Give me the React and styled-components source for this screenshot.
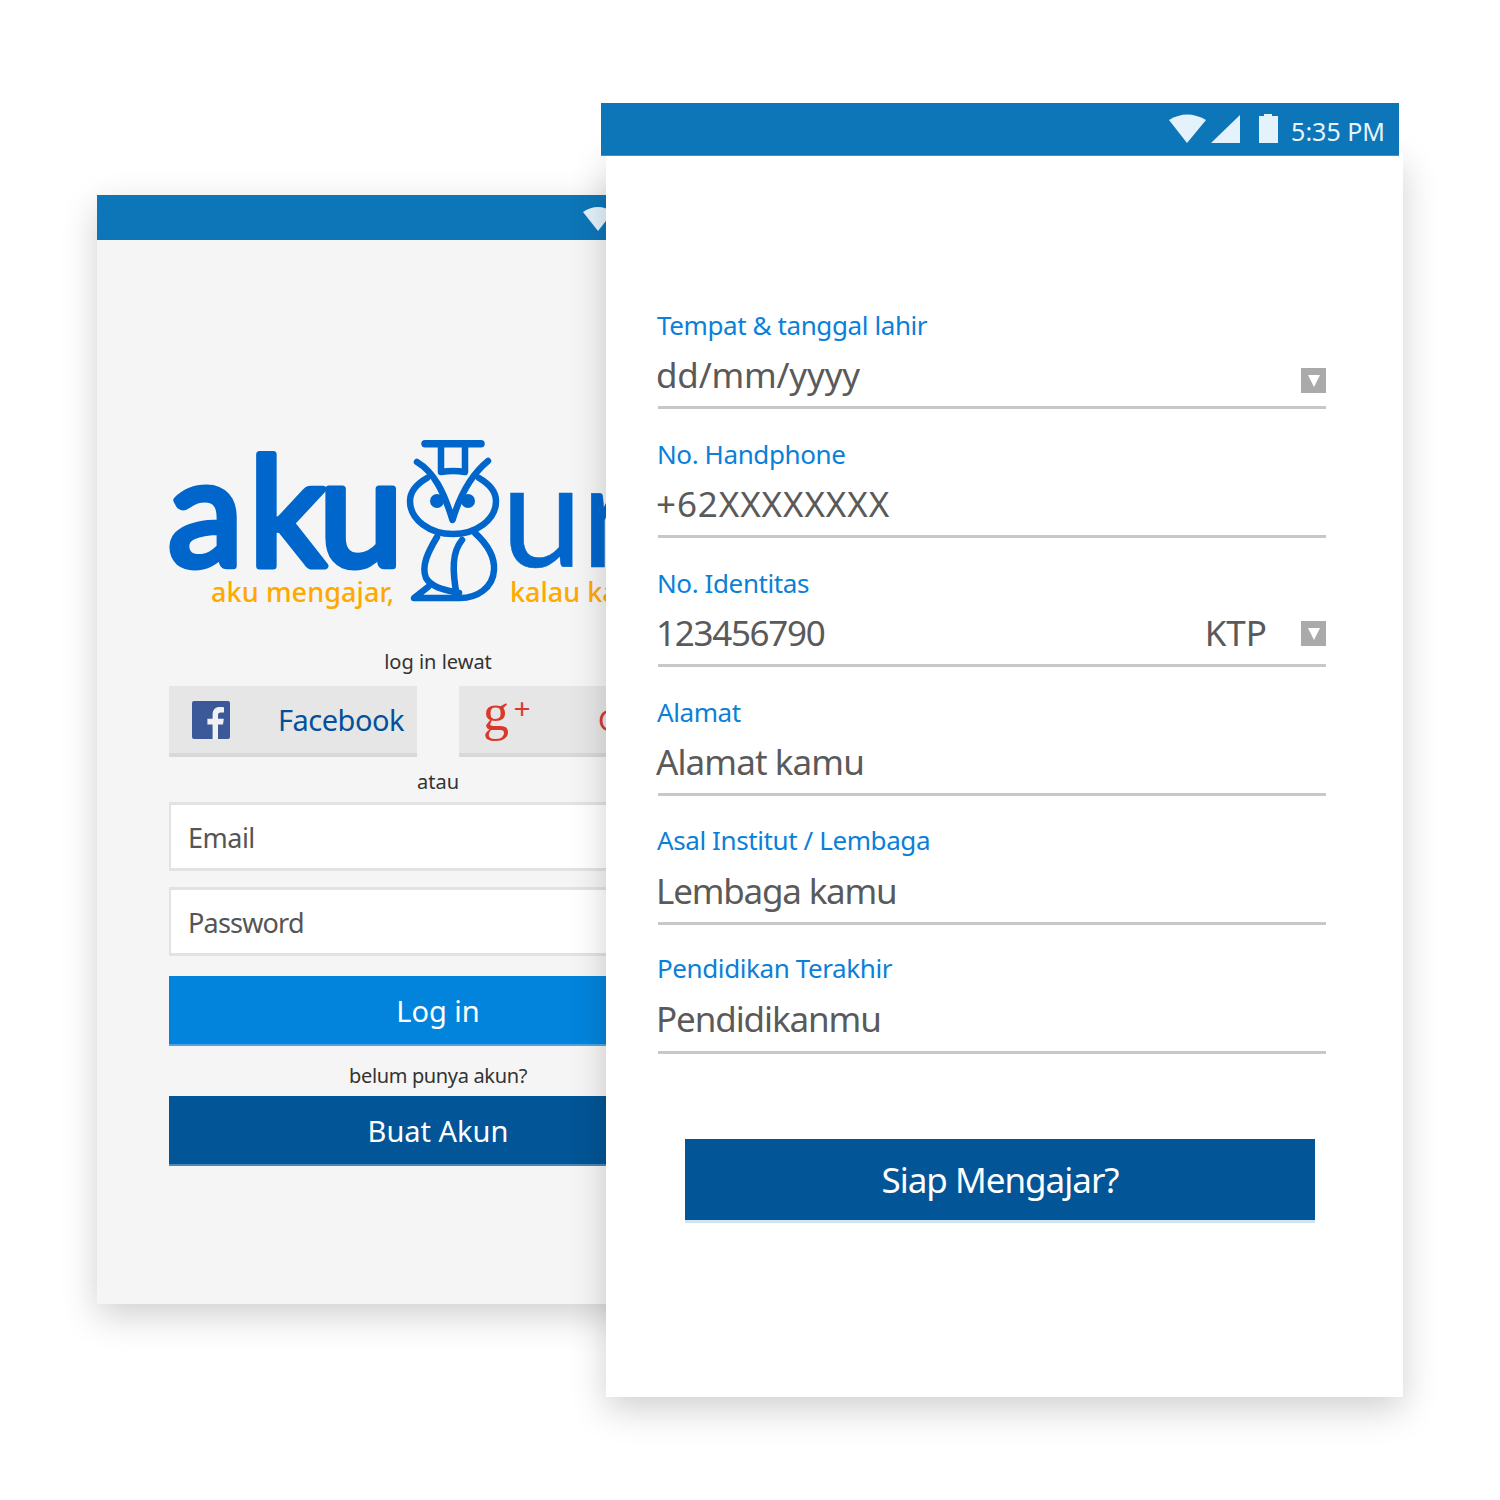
import React from "react";
import styled, { createGlobalStyle } from "styled-components";

const Global = createGlobalStyle`
  html, body { margin: 0; padding: 0; background: #fff; }
  * { box-sizing: border-box; }
  body { font-family: "Noto Sans", "Open Sans", sans-serif; }
`;

const Stage = styled.div`
  position: relative;
  width: 1500px;
  height: 1500px;
  background: #fff;
  overflow: hidden;
`;

const BackPhone = styled.section`
  position: absolute;
  left: 97px;
  top: 195px;
  width: 682px;
  height: 1109px;
  background: #f5f5f5;
  box-shadow: 0 12px 34px rgba(0, 0, 0, 0.19);
  display: flex;
  flex-direction: column;
`;

const BackBar = styled.div`
  height: 45px;
  background: #0d76b8;
  display: flex;
  justify-content: flex-end;
  align-items: center;
  padding-right: 166px;
`;

const BackBody = styled.div`
  padding: 0 72px;
  display: flex;
  flex-direction: column;
`;

const LogoBox = styled.div`
  height: 380px;
  margin: 0 -72px;
`;

const Hint = styled.div`
  font-size: 20px;
  line-height: 28px;
  color: #333;
  text-align: center;
  white-space: nowrap;
  letter-spacing: ${(p) => p.$track || 0}px;
  margin: ${(p) => p.$margin || 0};
`;

const SocialRow = styled.div`
  display: grid;
  grid-template-columns: 248px 248px;
  justify-content: space-between;
  margin: 10px 0 11px;
`;

const Social = styled.div`
  height: 71px;
  background: #e6e6e6;
  border-bottom: 4px solid #d8d8d8;
  display: flex;
  align-items: center;
  padding-left: ${(p) => p.$pad}px;
  color: ${(p) => p.$color};
  font-size: 29px;
  letter-spacing: -0.5px;
  white-space: nowrap;
`;

const SocialIcon = styled.span`
  width: ${(p) => p.$w}px;
  flex: none;
  display: flex;
  align-items: center;
`;

const GPlus = styled.span`
  font-family: "Liberation Serif", serif;
  color: #d8392b;
  font-size: 52px;
  line-height: 52px;
  display: flex;
  align-items: flex-start;
  margin-top: -14px;
`;

const Plus = styled.span`
  font-size: 30px;
  line-height: 44px;
  font-weight: 700;
  margin-left: 5px;
`;

const Input = styled.div`
  height: 69px;
  background: #fff;
  border: 2px solid #e2e2e2;
  border-top-width: 3px;
  border-bottom-width: 3px;
  border-right: 0;
  display: flex;
  align-items: center;
  padding: 2px 0 0 17px;
  font-size: 27px;
  letter-spacing: ${(p) => p.$track}px;
  color: #555;
  margin: ${(p) => p.$margin};
`;

const Action = styled.div`
  height: ${(p) => p.$h}px;
  background: ${(p) => p.$bg};
  border-bottom: 2px solid ${(p) => p.$edge};
  color: #fff;
  font-size: ${(p) => p.$size}px;
  display: flex;
  align-items: center;
  justify-content: center;
`;

const FrontPhone = styled.section`
  position: absolute;
  left: 606px;
  top: 153px;
  width: 797px;
  height: 1244px;
  background: #fff;
  box-shadow: 0 12px 34px rgba(0, 0, 0, 0.19);
`;

const FrontBar = styled.div`
  height: 53px;
  width: 798px;
  margin: -50px 0 0 -5px;
  background: #0d76b8;
  border-bottom: 1px solid #3a93cc;
  display: flex;
  justify-content: flex-end;
  align-items: center;
  padding: 3px 14px 0 0;
  color: #e8f4fb;
  font-size: 25px;
`;

const BarIcons = styled.svg`
  margin: -3px 12px 0 0;
`;

const Form = styled.div`
  padding: 123.5px 77px 0 52px;
  display: flex;
  flex-direction: column;
`;

const Field = styled.div`
  height: 129px;
  padding-top: 27px;
  display: flex;
  flex-direction: column;
`;

const Label = styled.div`
  font-size: 26px;
  line-height: 36px;
  color: #0a80d8;
  letter-spacing: -0.4px;
  margin: ${(p) => p.$rise || 0}px 0 0 -1px;
`;

const ValueRow = styled.div`
  flex: 1;
  border-bottom: 3px solid #c8c8c8;
  display: flex;
  align-items: center;
  color: #5a5a5a;
  font-size: 35px;
  margin-top: 1px;
`;

const Value = styled.span`
  flex: 1;
  margin-left: -2px;
  letter-spacing: ${(p) => p.$track}px;
`;

const Unit = styled.span`
  margin-right: 34px;
`;

const Caret = styled.span`
  width: 25px;
  height: 25px;
  background: #aaa;
  margin-top: ${(p) => p.$drop}px;
  display: flex;
  align-items: center;
  justify-content: center;
`;

const Tri = styled.span`
  width: 0;
  height: 0;
  border-left: 6px solid transparent;
  border-right: 6px solid transparent;
  border-top: 12px solid #fff;
`;

const Submit = styled.div`
  margin: 85.5px 0 0 27px;
  width: 630px;
  height: 84px;
  background: #025596;
  border-bottom: 3px solid #cfe3f1;
  color: #fff;
  font-size: 35px;
  letter-spacing: -1px;
  display: flex;
  align-items: center;
  justify-content: center;
`;

const Owl = () => (
  <g fill="none" stroke="#0066cc" strokeLinecap="round" strokeLinejoin="round" strokeWidth="6.500">
    <path d="M425 443.700H481" strokeWidth="7.500" />
    <path d="M441 446V472Q453 470 465 472V446" />
    <path d="M417 462C434 472 444 492 452.500 520C461 492 472 474 488 461" />
    <path d="M427 478C415 485 410 493 410 501C410 520 430 534 453 534C476 534 496 520 496 501C496 493 491 485 479 478" />
    <circle cx="437" cy="501" r="7" fill="#0066cc" stroke="none" />
    <circle cx="468" cy="501" r="7" fill="#0066cc" stroke="none" />
    <path d="M475 533C487 544 495 556 494 570C493 588 477 598 460 598H414L428 587" />
    <path d="M437 537C428 552 421 566 426 578C432 588 446 590 459 593" />
    <path d="M462 540C452 552 452 570 457 597" />
  </g>
);

const Logo = () => (
  <svg width="682" height="380" viewBox="97 240 682 380">
    <g fontFamily="Lato, sans-serif" fill="#0066cc" stroke="#0066cc" strokeLinejoin="round">
      <text x="168 249 319" y="566" fontSize="151" fontWeight="400" strokeWidth="7">aku</text>
      <text x="501 581 640" y="567" fontSize="146" fontWeight="400" strokeWidth="0.500">uru</text>
    </g>
    <Owl />
    <g fontFamily="Noto Sans, sans-serif" fill="#ffa800" fontSize="27" fontWeight="500">
      <text x="211" y="602" letterSpacing="0.100">aku mengajar,</text>
      <text x="510" y="602">kalau kamu</text>
    </g>
  </svg>
);

const Fb = () => (
  <svg width="38" height="38" viewBox="0 0 38 38">
    <rect width="38" height="38" rx="2" fill="#3b5998" />
    <path d="M26 38V23.500h5l.8-5.700H26v-3.600c0-1.700.5-2.800 2.900-2.800H32V6.300C31.400 6.200 29.700 6 27.700 6 23.500 6 20.600 8.600 20.600 13.300v4.500h-5.200v5.700h5.200V38z" fill="#f0f0f0" />
  </svg>
);

const fields = [
  { label: "Tempat & tanggal lahir", value: "dd/mm/yyyy", track: -0.2, drop: 12 },
  { label: "No. Handphone", value: "+62XXXXXXXX", track: 0.9 },
  { label: "No. Identitas", value: "123456790", track: -1.3, unit: "KTP", drop: 2 },
  { label: "Alamat", value: "Alamat kamu", track: -0.9 },
  { label: "Asal Institut / Lembaga", value: "Lembaga kamu", track: -1.2, rise: -1 },
  { label: "Pendidikan Terakhir", value: "Pendidikanmu", track: -1.1, rise: -2 },
];

export default function App() {
  return (
    <Stage>
      <Global />
      <BackPhone>
        <BackBar>
          <svg width="30" height="26" viewBox="0 0 30 26">
            <path d="M0 7Q15 -3 30 7L15 26Z" fill="#e3f2fb" />
          </svg>
        </BackBar>
        <BackBody>
          <LogoBox>
            <Logo />
          </LogoBox>
          <Hint $margin="28px 0 0">log in lewat</Hint>
          <SocialRow>
            <Social $pad={23} $color="#05509a">
              <SocialIcon $w={86}><Fb /></SocialIcon>
              Facebook
            </Social>
            <Social $pad={24} $color="#d8392b">
              <SocialIcon $w={115}>
                <GPlus>g<Plus>+</Plus></GPlus>
              </SocialIcon>
              Google
            </Social>
          </SocialRow>
          <Hint>atau</Hint>
          <Input $track={-0.5} $margin="6px 0 16px">Email</Input>
          <Input $track={-0.8} $margin="0 0 20px">Password</Input>
          <Action $h={70} $bg="#0284dc" $edge="#4aa6e6" $size={29}>Log in</Action>
          <Hint $track={-0.35} $margin="16px 0 6px">belum punya akun?</Hint>
          <Action $h={70} $bg="#025596" $edge="#4a86b6" $size={29}>Buat Akun</Action>
        </BackBody>
      </BackPhone>
      <FrontPhone>
        <FrontBar>
          <BarIcons width="110" height="34" viewBox="0 0 110 34">
            <path d="M0 8Q18 -3 37 8L18 31Z" fill="#e3f2fb" />
            <path d="M42 31L71 3V31Z" fill="#e3f2fb" />
            <path d="M90 7V4H95V2H103V4H109V31H90Z" fill="#e3f2fb" />
          </BarIcons>
          5:35 PM
        </FrontBar>
        <Form>
          {fields.map((f) => (
            <Field key={f.label}>
              <Label $rise={f.rise}>{f.label}</Label>
              <ValueRow>
                <Value $track={f.track}>{f.value}</Value>
                {f.unit && <Unit>{f.unit}</Unit>}
                {f.drop !== undefined && <Caret $drop={f.drop}><Tri /></Caret>}
              </ValueRow>
            </Field>
          ))}
          <Submit>Siap Mengajar?</Submit>
        </Form>
      </FrontPhone>
    </Stage>
  );
}
